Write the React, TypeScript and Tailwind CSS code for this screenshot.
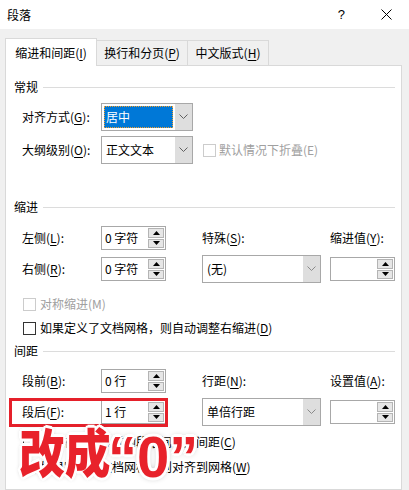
import React from "react";

const U = ({ c }: { c: string }) => (
  <span className="underline underline-offset-[2px] decoration-[1px]">{c}</span>
);

const Chevron = ({ color = "#606060" }: { color?: string }) => (
  <svg width="9" height="6" viewBox="0 0 9 6">
    <polyline points="0.5,0.5 4.5,4.5 8.5,0.5" fill="none" stroke={color} strokeWidth="1" />
  </svg>
);

const TriUp = () => (
  <svg width="7" height="4" viewBox="0 0 7 4">
    <polygon points="0,4 7,4 3.5,0" fill="#000" />
  </svg>
);
const TriDown = () => (
  <svg width="7" height="4" viewBox="0 0 7 4">
    <polygon points="0,0 7,0 3.5,4" fill="#000" />
  </svg>
);

function Spin({ value }: { value?: string }) {
  return (
    <div className="flex h-[24px] w-[65px] border border-[#a8a8a8] bg-white">
      <div className="flex flex-1 items-center whitespace-pre pl-[3px] leading-[16px]">{value}</div>
      <div className="flex w-[17px] flex-col gap-[1px] py-[1px] pr-[1px]">
        <div className="flex flex-1 items-center justify-center border border-[#b4b4b4] bg-[#e6e6e6]">
          <TriUp />
        </div>
        <div className="flex flex-1 items-center justify-center border border-[#b4b4b4] bg-[#e6e6e6]">
          <TriDown />
        </div>
      </div>
    </div>
  );
}

function Select({
  wide,
  children,
}: {
  wide?: boolean;
  children: React.ReactNode;
}) {
  return (
    <div
      className={
        wide
          ? "flex h-[28px] w-[119px] border border-[#a8a8a8] bg-white"
          : "flex h-[28px] w-[92px] border border-[#a8a8a8] bg-white"
      }
    >
      <div className="flex flex-1 items-stretch p-[2px] leading-[16px]">{children}</div>
      <div className="flex w-[17px] items-center justify-center bg-[#dedede]">
        <Chevron color={wide ? "#8a8a8a" : "#606060"} />
      </div>
    </div>
  );
}

function Header({ title }: { title: string }) {
  return (
    <div className="flex h-[14px] items-center">
      <span className="leading-[14px]">{title}</span>
      <div className="ml-[5px] h-px flex-1 bg-[#dcdcdc]" />
    </div>
  );
}

function Check({ disabled }: { disabled?: boolean }) {
  return (
    <div
      className={
        disabled
          ? "h-[13px] w-[13px] border border-[#cccccc] bg-white"
          : "h-[13px] w-[13px] border border-[#333333] bg-white"
      }
    />
  );
}

export default function App() {
  return (
    <div
      className="relative flex h-[490px] w-[409px] flex-col overflow-hidden bg-[#f0f0f0] text-[12px] text-black"
      style={{ fontFamily: '"Noto Sans CJK SC", "Noto Sans", sans-serif' }}
    >
      {/* title bar */}
      <div className="flex h-[29px] shrink-0 items-center bg-white pl-[7px] text-[12px]">
        <span className="leading-[16px]">段落</span>
        <span className="ml-auto mr-[36px] text-[13px] leading-[16px]" style={{ fontFamily: '"Liberation Sans", sans-serif' }}>?</span>
        <svg width="11" height="11" viewBox="0 0 11 11" className="mr-[17px]">
          <line x1="0.5" y1="0.5" x2="10.5" y2="10.5" stroke="#000" strokeWidth="1" />
          <line x1="10.5" y1="0.5" x2="0.5" y2="10.5" stroke="#000" strokeWidth="1" />
        </svg>
      </div>

      {/* body */}
      <div className="flex flex-1 flex-col pl-[5px] pr-[7px] pt-[9px]">
        {/* tabs */}
        <div className="flex h-[27px] shrink-0 items-end">
          <div className="relative z-10 -mb-px flex h-[28px] w-[92px] items-center justify-center border border-b-0 border-[#d9d9d9] bg-white leading-[16px]">
            缩进和间距(<U c="I" />)
          </div>
          <div className="flex h-[25px] w-[91px] items-center justify-center border-r border-t border-[#d9d9d9] bg-[#f0f0f0] leading-[16px]">
            换行和分页(<U c="P" />)
          </div>
          <div className="flex h-[25px] w-[81px] items-center justify-center border-r border-t border-[#d9d9d9] bg-[#f0f0f0] leading-[16px]">
            中文版式(<U c="H" />)
          </div>
        </div>

        {/* panel */}
        <div className="flex flex-1 flex-col border border-[#d9d9d9] bg-white pl-[8px] pr-[6px]">
          <div className="mt-[14px]">
            <Header title="常规" />
          </div>

          <div className="mt-[9px] flex h-[28px] items-center pl-[8px]">
            <div className="w-[79px] leading-[16px]">
              对齐方式(<U c="G" />):
            </div>
            <Select>
              <div className="flex flex-1 items-center bg-[#0078d7] pl-[2px] text-white outline outline-1 outline-dotted outline-[#f0a030] -outline-offset-1">
                居中
              </div>
            </Select>
          </div>

          <div className="mt-[5px] flex h-[28px] items-center pl-[8px]">
            <div className="w-[79px] leading-[16px]">
              大纲级别(<U c="O" />):
            </div>
            <Select>
              <div className="flex flex-1 items-center pl-[2px]">正文文本</div>
            </Select>
            <div className="ml-[10px]">
              <Check disabled />
            </div>
            <span className="ml-[3px] leading-[16px] text-[#a0a0a0]">默认情况下折叠(E)</span>
          </div>

          <div className="mt-[36px]">
            <Header title="缩进" />
          </div>

          <div className="mt-[12px] flex h-[24px] items-center pl-[8px]">
            <div className="w-[79px] leading-[16px]">
              左侧(<U c="L" />):
            </div>
            <Spin value="0 字符" />
            <div className="ml-[36px] w-[119px] leading-[16px]">
              特殊(<U c="S" />):
            </div>
            <div className="ml-[9px] leading-[16px]">
              缩进值(<U c="Y" />):
            </div>
          </div>

          <div className="mt-[5px] flex h-[28px] items-center pl-[8px]">
            <div className="w-[79px] leading-[16px]">
              右侧(<U c="R" />):
            </div>
            <Spin value="0 字符" />
            <div className="ml-[36px]">
              <Select wide>
                <div className="flex flex-1 items-center pl-[2px]">(无)</div>
              </Select>
            </div>
            <div className="ml-[9px]">
              <Spin />
            </div>
          </div>

          <div className="mt-[13px] flex h-[16px] items-center pl-[9px]">
            <Check disabled />
            <span className="ml-[4px] leading-[16px] text-[#a0a0a0]">对称缩进(M)</span>
          </div>

          <div className="mt-[8px] flex h-[16px] items-center pl-[9px]">
            <Check />
            <span className="ml-[4px] leading-[16px]">
              如果定义了文档网格，则自动调整右缩进(<U c="D" />)
            </span>
          </div>

          <div className="mt-[8px]">
            <Header title="间距" />
          </div>

          <div className="mt-[11px] flex h-[24px] items-center pl-[8px]">
            <div className="w-[79px] leading-[16px]">
              段前(<U c="B" />):
            </div>
            <Spin value="0 行" />
            <div className="ml-[36px] w-[119px] leading-[16px]">
              行距(<U c="N" />):
            </div>
            <div className="ml-[9px] leading-[16px]">
              设置值(<U c="A" />):
            </div>
          </div>

          <div className="mt-[5px] flex h-[28px] items-center pl-[8px]">
            <div className="w-[79px] leading-[16px]">
              段后(<U c="F" />):
            </div>
            <Spin value="1 行" />
            <div className="ml-[36px]">
              <Select wide>
                <div className="flex flex-1 items-center pl-[2px]">单倍行距</div>
              </Select>
            </div>
            <div className="ml-[9px]">
              <Spin />
            </div>
          </div>

          <div className="mt-[8px] flex h-[16px] items-center pl-[9px]">
            <Check />
            <span className="ml-[4px] leading-[16px]">
              不要在相同样式的段落间增加间距(<U c="C" />)
            </span>
          </div>

          <div className="mt-[9px] flex h-[16px] items-center pl-[9px]">
            <Check />
            <span className="ml-[4px] leading-[16px]">
              如果定义了文档网格，则对齐到网格(<U c="W" />)
            </span>
          </div>
        </div>
      </div>

      {/* annotation: red box */}
      <div className="absolute left-[9px] top-[398px] h-[29px] w-[159px] border-[3px] border-[#e5202a]" />

      {/* annotation: big text */}
      <div
        className="absolute left-[19px] top-[425px] origin-left scale-x-[0.88] whitespace-nowrap text-[52px] font-black leading-none text-[#e8222b] [text-shadow:3px_0_0_#fff,-3px_0_0_#fff,0_3px_0_#fff,0_-3px_0_#fff,2px_2px_0_#fff,-2px_-2px_0_#fff,2px_-2px_0_#fff,-2px_2px_0_#fff,0_0_6px_rgba(0,0,0,0.45)]"
        style={{ fontFamily: '"Noto Sans CJK SC", sans-serif' }}
      >
        改成
      </div>
      <div
        className="absolute left-[108px] top-[428px] whitespace-nowrap text-[58px] font-bold leading-none text-[#e8222b] [text-shadow:3px_0_0_#fff,-3px_0_0_#fff,0_3px_0_#fff,0_-3px_0_#fff,2px_2px_0_#fff,-2px_-2px_0_#fff,2px_-2px_0_#fff,-2px_2px_0_#fff,0_0_6px_rgba(0,0,0,0.45)]"
        style={{ fontFamily: '"Liberation Sans", sans-serif' }}
      >
        “0”
      </div>
    </div>
  );
}
